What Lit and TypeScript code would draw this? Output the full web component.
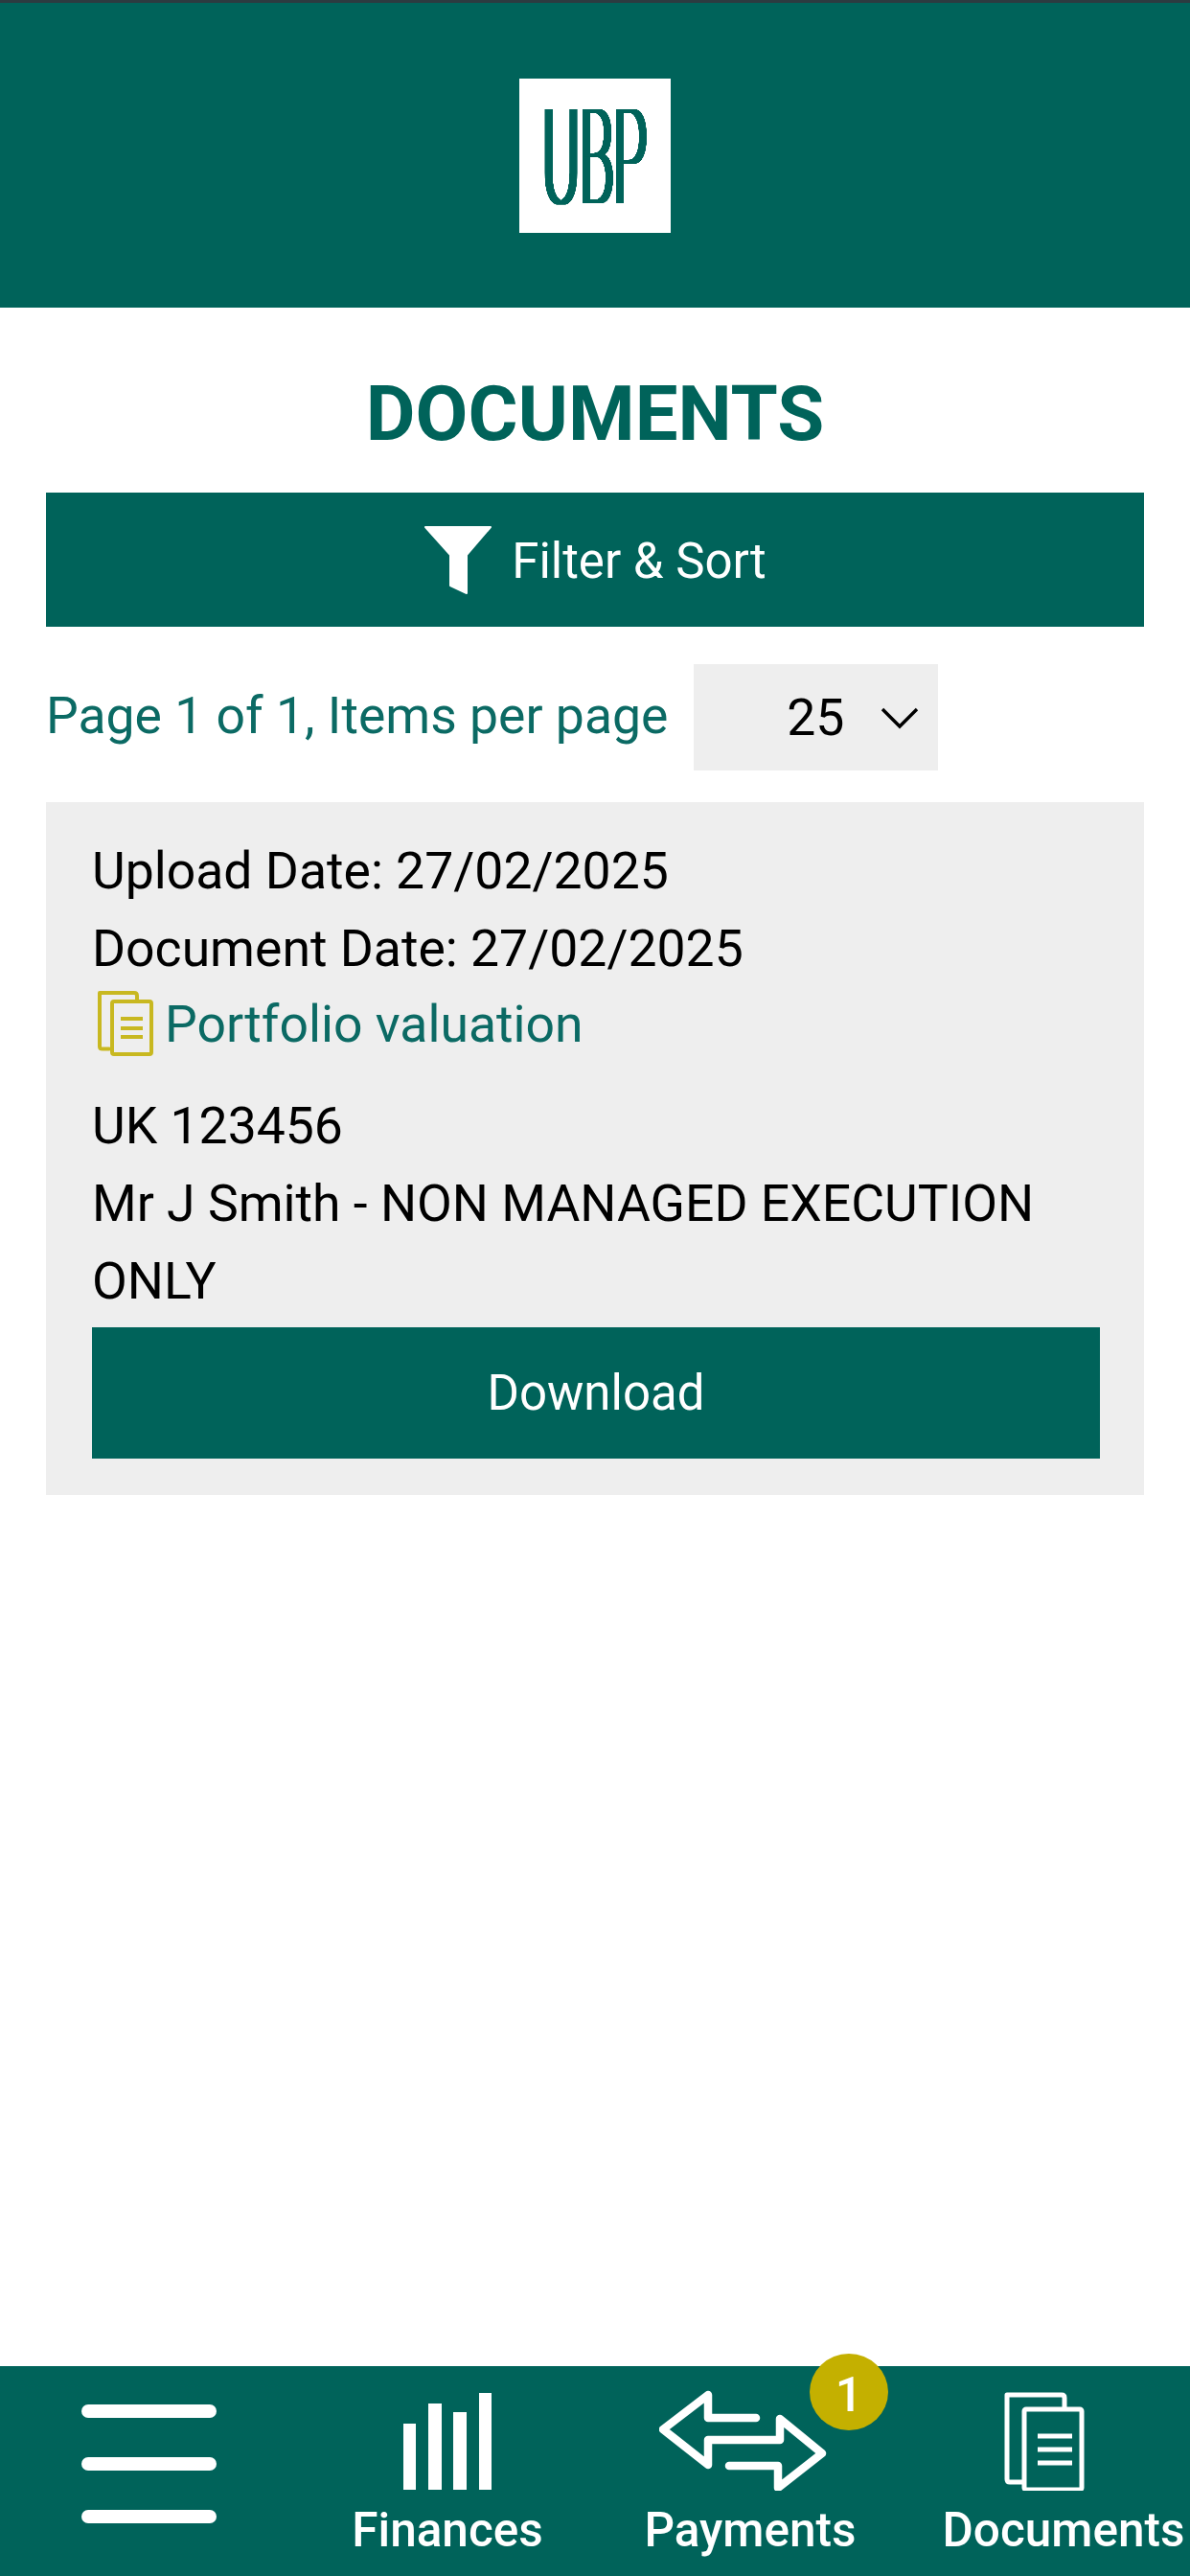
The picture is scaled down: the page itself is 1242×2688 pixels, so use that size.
import { LitElement, html, css, svg } from 'lit';
import { customElement } from 'lit/decorators.js';

const docIcon = svg`
  <path d="M2 2H38C40 2 41 3 41 5V9M2 2V58C2 60 3 60.5 5 60.5H12" fill="none" stroke="currentColor" stroke-width="4" stroke-linecap="round"/>
  <rect x="15" y="11" width="41" height="55" rx="2" fill="none" stroke="currentColor" stroke-width="4"/>
  <path d="M24 29H47M24 39H47M24 48H47" fill="none" stroke="currentColor" stroke-width="4"/>
`;

@customElement('app-root')
export class AppRoot extends LitElement {
  static styles = css`
    :host {
      display: flex;
      flex-direction: column;
      min-height: 2688px;
      font-family: Roboto, "Liberation Sans", sans-serif;
      background: #fff;
      color: #000;
    }
    .header {
      height: 318px;
      flex: none;
      background: #00635a;
      border-top: 3px solid #2c3b40;
      display: flex;
      align-items: center;
      justify-content: center;
    }
    .logo {
      width: 158px;
      height: 161px;
      background: #fff;
      display: block;
      overflow: visible;
    }
    .logo text {
      font-family: Roboto, sans-serif;
      font-weight: 100;
      font-size: 59.3px;
      text-rendering: geometricPrecision;
      fill: #00635a;
    }
    main {
      flex: 1;
      padding: 0 48px;
    }
    h1 {
      margin: 0;
      height: 193px;
      box-sizing: border-box;
      padding-top: 27px;
      display: flex;
      align-items: center;
      justify-content: center;
      font-size: 79.6px;
      font-weight: 700;
      color: #00635a;
    }
    .filter {
      height: 140px;
      background: #00635a;
      color: #fff;
      display: flex;
      align-items: center;
      justify-content: center;
      gap: 20px;
      font-size: 51px;
    }
    .filter span {
      padding-top: 3px;
    }
    .pager {
      margin-top: 39px;
      display: flex;
      align-items: center;
      gap: 27px;
      font-size: 53.5px;
      color: #0b6a64;
    }
    .pager > span {
      padding-bottom: 5px;
    }
    .select {
      width: 255px;
      height: 111px;
      background: #eee;
      color: #000;
      display: flex;
      align-items: center;
      justify-content: flex-end;
      gap: 38px;
      padding-right: 20px;
      box-sizing: border-box;
    }
    .card {
      margin-top: 33px;
      background: #eee;
      padding: 31px 46px 38px 48px;
      font-size: 53.5px;
      line-height: 81px;
    }
    .doc-link {
      display: flex;
      align-items: center;
      gap: 12px;
      color: #0b6a64;
      height: 76px;
      margin-left: 6px;
      margin-bottom: 28px;
    }
    .doc-link svg {
      color: #c8b820;
    }
    .download {
      margin-top: 8px;
      height: 137px;
      background: #00635a;
      color: #fff;
      font-size: 51px;
      display: flex;
      align-items: center;
      justify-content: center;
    }
    nav {
      flex: none;
      height: 219px;
      background: #00635a;
      color: #fff;
      display: grid;
      grid-template-columns: 310px 314px 318px 1fr;
    }
    .item {
      position: relative;
      display: flex;
      flex-direction: column;
      align-items: center;
      justify-content: flex-start;
      font-size: 49.5px;
      font-weight: 500;
      line-height: 58px;
    }
    .item svg {
      display: block;
      height: 130px;
      flex: none;
      margin-bottom: 12px;
    }
    .burger {
      display: flex;
      flex-direction: column;
      gap: 41px;
      width: 141px;
      padding-top: 40px;
    }
    .burger span {
      display: block;
      height: 14px;
      border-radius: 7px;
      background: #fff;
    }
    .documents {
      padding-left: 36px;
    }
    .documents svg {
      margin-right: 40px;
    }
    .badge {
      position: absolute;
      left: 221px;
      top: -13px;
      width: 82px;
      height: 80px;
      box-sizing: border-box;
      padding-top: 5px;
      border-radius: 50%;
      background: #c4b000;
      color: #fff;
      font-size: 50px;
      font-weight: 500;
      display: flex;
      align-items: center;
      justify-content: center;
    }
  `;

  render() {
    return html`
      <div class="header">
        <svg class="logo" viewBox="0 0 158 161">
          <filter id="stems" x="-5%" y="-5%" width="110%" height="110%">
            <feMorphology operator="dilate" radius="3 0"/>
            <feComponentTransfer>
              <feFuncA type="linear" slope="3"/>
            </feComponentTransfer>
          </filter>
          <g filter="url(#stems)">
            <text x="26 67 104" y="55.9" transform="scale(.95 2.326)">UBP</text>
          </g>
        </svg>
      </div>
      <main>
        <h1>DOCUMENTS</h1>
        <div class="filter">
          <svg width="72" height="72" viewBox="0 0 72 72">
            <path d="M2 2H70L45 31V71L28 63V31Z" fill="#fff" stroke="#fff" stroke-width="2" stroke-linejoin="round"/>
          </svg>
          <span>Filter &amp; Sort</span>
        </div>
        <div class="pager">
          <span>Page 1 of 1, Items per page</span>
          <div class="select">
            <span>25</span>
            <svg width="40" height="24" viewBox="0 0 40 24">
              <path d="M2 3L20 21L38 3" fill="none" stroke="#000" stroke-width="3.4"/>
            </svg>
          </div>
        </div>
        <div class="card">
          <div>Upload Date: 27/02/2025</div>
          <div>Document Date: 27/02/2025</div>
          <div class="doc-link">
            <svg width="58" height="68" viewBox="0 0 58 68">${docIcon}</svg>
            <span>Portfolio valuation</span>
          </div>
          <div>UK 123456</div>
          <div>Mr J Smith - NON MANAGED EXECUTION ONLY</div>
          <div class="download">Download</div>
        </div>
      </main>
      <nav>
        <div class="item"><div class="burger"><span></span><span></span><span></span></div></div>
        <div class="item">
          <svg width="92" height="130" viewBox="0 0 92 130">
            <path d="M0 60H13V129H0ZM26 39H40V129H26ZM52 48H66V129H52ZM79 28H92V129H79Z" fill="#fff"/>
          </svg>
          <span>Finances</span>
        </div>
        <div class="item">
          <svg width="190" height="130" viewBox="0 0 190 130">
            <path d="M101 54H51V30L4 66L51 103V77H126V55L170 91L124 127V104H73" fill="none" stroke="#fff" stroke-width="8.5" stroke-linecap="round" stroke-linejoin="round"/>
          </svg>
          <span>Payments</span>
          <div class="badge">1</div>
        </div>
        <div class="item documents">
          <svg width="84" height="130" viewBox="0 0 84 130">
            <path d="M3 30H60C62 30 63 31 63 33V43M3 30V118C3 120 4 121 6 121H20" fill="none" stroke="#fff" stroke-width="5" stroke-linecap="round"/>
            <rect x="21" y="45" width="60" height="84" rx="2" fill="none" stroke="#fff" stroke-width="5"/>
            <path d="M35 73H71M35 87H71M35 101H71" fill="none" stroke="#fff" stroke-width="5"/>
          </svg>
          <span>Documents</span>
        </div>
      </nav>
    `;
  }
}
